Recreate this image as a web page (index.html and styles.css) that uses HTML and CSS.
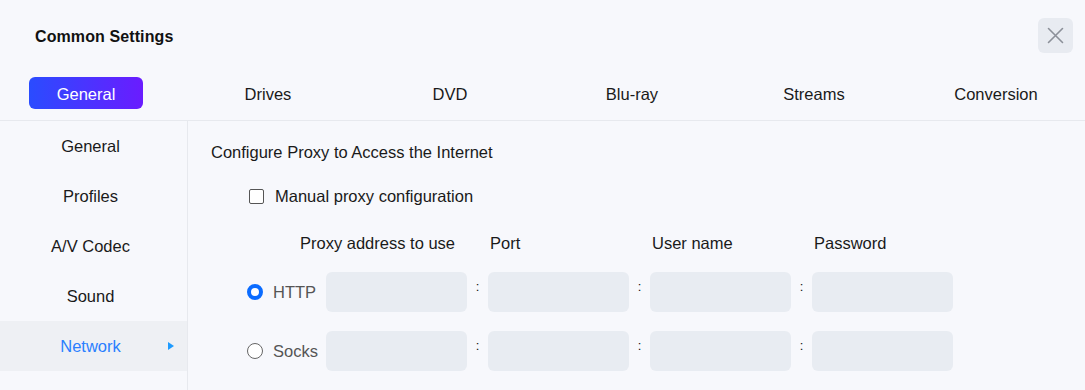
FILE: index.html
```html
<!DOCTYPE html>
<html>
<head>
<meta charset="utf-8">
<link rel="stylesheet" href="styles.css">
</head>
<body>
<div class="dialog">
  <div class="header">
    <div class="title">Common Settings</div>
    <button class="close" aria-label="Close">
      <svg width="17" height="17" viewBox="0 0 17 17"><path d="M1.5 1.5 L15.5 15.5 M15.5 1.5 L1.5 15.5" stroke="#8c9099" stroke-width="1.6" fill="none" stroke-linecap="round"/></svg>
    </button>
  </div>
  <div class="tabs">
    <div class="tab active">General</div>
    <div class="tab">Drives</div>
    <div class="tab">DVD</div>
    <div class="tab">Blu-ray</div>
    <div class="tab">Streams</div>
    <div class="tab">Conversion</div>
  </div>
  <div class="main">
    <div class="sidebar">
      <div class="side-item">General</div>
      <div class="side-item">Profiles</div>
      <div class="side-item">A/V Codec</div>
      <div class="side-item">Sound</div>
      <div class="side-item selected">Network<span class="arrow"></span></div>
    </div>
    <div class="content">
      <div class="section-title">Configure Proxy to Access the Internet</div>
      <label class="check-row"><span class="checkbox"></span>Manual proxy configuration</label>
      <div class="proxy-grid">
        <div class="hdr hdr-first">Proxy address to use</div>
        <div></div>
        <div class="hdr">Port</div>
        <div></div>
        <div class="hdr">User name</div>
        <div></div>
        <div class="hdr">Password</div>

        <div class="radio-cell"><span class="radio on"></span>HTTP</div>
        <div class="field"></div><div class="colon">:</div>
        <div class="field"></div><div class="colon">:</div>
        <div class="field"></div><div class="colon">:</div>
        <div class="field"></div>

        <div class="radio-cell"><span class="radio"></span>Socks</div>
        <div class="field"></div><div class="colon">:</div>
        <div class="field"></div><div class="colon">:</div>
        <div class="field"></div><div class="colon">:</div>
        <div class="field"></div>
      </div>
    </div>
  </div>
</div>
</body>
</html>
```
FILE: styles.css
```css
* { box-sizing: border-box; }
html, body { margin: 0; padding: 0; }
body {
  background: #f7f8fc;
  font-family: "Liberation Sans", Arial, sans-serif;
  color: #1a1a1a;
  width: 1085px;
  height: 390px;
  overflow: hidden;
}
.header {
  display: flex;
  justify-content: space-between;
  align-items: center;
  padding: 18px 12px 0 35px;
  height: 53px;
}
.title {
  font-size: 16px;
  font-weight: bold;
  color: #111;
  letter-spacing: 0.1px;
  padding-top: 2px;
}
.close {
  width: 35px;
  height: 35px;
  border: none;
  border-radius: 6px;
  background: #e8ebf1;
  display: flex;
  align-items: center;
  justify-content: center;
  padding: 0;
}
.tabs {
  display: flex;
  justify-content: space-between;
  padding: 0 32px 0 29px;
  margin-top: 24px;
  height: 32px;
}
.tab {
  width: 114px;
  height: 32px;
  line-height: 34px;
  text-align: center;
  font-size: 16.5px;
  color: #1a1a1a;
  border-radius: 6px;
  white-space: nowrap;
}
.tab.active {
  background: linear-gradient(90deg, #2a4cff 0%, #6a1cff 100%);
  color: #fff;
}
.main {
  display: flex;
  margin-top: 11px;
  border-top: 1px solid #e7e9ee;
  height: 270px;
}
.sidebar {
  width: 188px;
  border-right: 1px solid #e7e9ee;
}
.side-item {
  position: relative;
  height: 50px;
  line-height: 50px;
  text-align: center;
  font-size: 16.5px;
  padding-right: 6px;
  color: #1a1a1a;
}
.side-item.selected {
  background: #eef0f4;
  color: #2a7fff;
}
.arrow {
  position: absolute;
  left: 168px;
  top: 21px;
  width: 0;
  height: 0;
  border-top: 4.5px solid transparent;
  border-bottom: 4.5px solid transparent;
  border-left: 6px solid #1e9bff;
}
.content {
  padding: 21px 0 0 23px;
  font-size: 16.5px;
}
.section-title {
  height: 19px;
  line-height: 20px;
}
.check-row {
  display: flex;
  align-items: center;
  margin: 26px 0 0 38px;
  height: 18px;
  line-height: 18px;
}
.checkbox {
  width: 15px;
  height: 15px;
  border: 1px solid #555;
  border-radius: 2px;
  background: #fff;
  margin-right: 11px;
}
.proxy-grid {
  display: grid;
  grid-template-columns: 79px 141px 21px 141px 21px 141px 21px 141px;
  grid-template-rows: 20px 40px 40px;
  row-gap: 19px;
  margin: 28px 0 0 36px;
}
.proxy-grid > .hdr-first { grid-column: 1 / 3; }
.hdr {
  line-height: 20px;
  padding-left: 2px;
  color: #1a1a1a;
  white-space: nowrap;
}
.hdr-first { padding-left: 53px; }
.radio-cell {
  display: flex;
  align-items: center;
  color: #555;
}
.radio {
  width: 16px;
  height: 16px;
  border-radius: 50%;
  border: 1.5px solid #666;
  background: #fff;
  margin-right: 10px;
}
.radio.on {
  border: 4.5px solid #0b6cff;
}
.field {
  height: 40px;
  background: #e8ecf2;
  border-radius: 6px;
}
.colon {
  text-align: center;
  font-size: 13px;
  line-height: 30px;
  color: #111;
}
```
